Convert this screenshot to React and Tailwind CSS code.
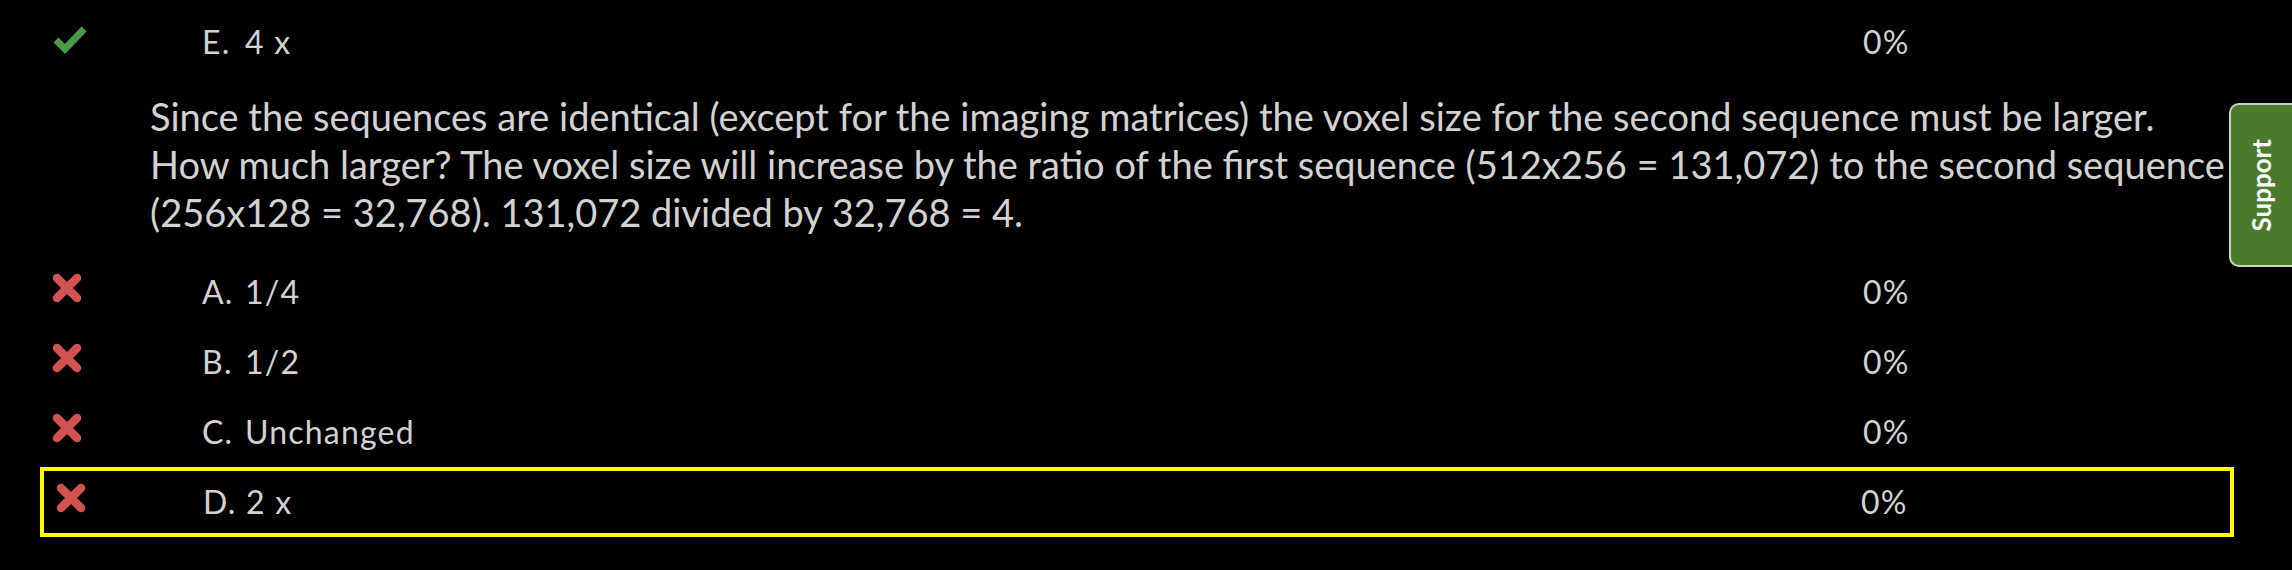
import React from 'react';

const CheckIcon = () => (
  <svg width="36" height="31" viewBox="0 0 36 31" className="mb-[8px]">
    <polyline points="4,17 13,26 32,6" fill="none" stroke="#4a9a4a" strokeWidth="7" strokeLinejoin="miter" />
  </svg>
);

const CrossIcon = () => (
  <svg width="30" height="30" viewBox="0 0 30 30" className="mb-[8px]">
    <g stroke="#d2524f" strokeWidth="8.5" strokeLinecap="round">
      <line x1="5" y1="5" x2="25" y2="25" />
      <line x1="25" y1="5" x2="5" y2="25" />
    </g>
  </svg>
);

const answers = [
  { letter: 'A.', text: '1/4' },
  { letter: 'B.', text: '1/2' },
  { letter: 'C.', text: 'Unchanged' },
];

const AnswerRow = ({ icon, letter, text, selected }) => (
  <div
    className={
      selected
        ? 'flex h-[70px] w-[2194px] items-center border-4 border-[#ffff00]'
        : 'flex h-[70px] w-[2194px] items-center'
    }
  >
    <div className={selected ? 'flex w-[159px] items-center pl-[12px]' : 'flex w-[162px] items-center pl-[12px]'}>
      {icon}
    </div>
    <div className="flex-1 text-[32px] leading-none tracking-[1.2px]">
      <span className="inline-block w-[43px]">{letter}</span>
      {text}
    </div>
    <div
      className={
        selected
          ? 'w-[369px] text-[32px] leading-none tracking-[1.2px]'
          : 'w-[371px] text-[32px] leading-none tracking-[1.2px]'
      }
    >
      0%
    </div>
  </div>
);

export default function App() {
  return (
    <div className="relative h-[570px] w-full overflow-hidden bg-black font-['Lato',sans-serif] text-[#d2d2d2]">
      <div className="pt-[7px] pl-[40px]">
        <AnswerRow icon={<CheckIcon />} letter="E." text="4 x" />

        <p className="mt-[15px] ml-[110px] w-[2085px] text-[38px] leading-[48px]">
          Since the sequences are identical (except for the imaging matrices) the voxel size for the second sequence must be larger. How much larger? The voxel size will increase by the ratio of the first sequence (512x256 = 131,072) to the second sequence (256x128 = 32,768). 131,072 divided by 32,768 = 4.
        </p>

        <div className="mt-[21px]">
          {answers.map((a) => (
            <AnswerRow key={a.letter} icon={<CrossIcon />} letter={a.letter} text={a.text} />
          ))}
          <AnswerRow icon={<CrossIcon />} letter="D." text="2 x" selected />
        </div>
      </div>

      {/* floating support tab */}
      <div className="absolute top-[103px] right-0 flex h-[164px] w-[63px] items-center justify-center rounded-l-[10px] border-2 border-r-0 border-[#c9d6bc] bg-[#4a7a2b]">
        <span className="rotate-180 text-[26px] font-bold text-white [writing-mode:vertical-rl]">Support</span>
      </div>
    </div>
  );
}
